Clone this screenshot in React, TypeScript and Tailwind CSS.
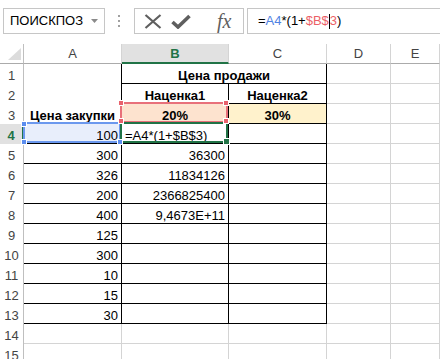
import React from "react";

const g = "border-[#d4d4d4]";
const k = "border-black";

function Cell({ children, className = "" }: { children?: React.ReactNode; className?: string }) {
  return (
    <div
      className={`relative flex items-end whitespace-nowrap border-r border-b px-[3px] text-[13px] leading-[15px] text-black ${className}`}
    >
      {children}
    </div>
  );
}

function RowHead({ n, active = false }: { n: number; active?: boolean }) {
  return (
    <div
      className={`flex items-end justify-center pb-[1px] text-[13px] leading-[15px] ${
        active
          ? "border-r-2 border-[#217346] bg-[#e1e1e1] font-bold text-[#217346]"
          : "border-r border-[#bfbfbf] text-[#444]"
      }`}
    >
      {n}
    </div>
  );
}

function ColHead({ label, active = false }: { label: string; active?: boolean }) {
  return (
    <div
      className={`flex items-center justify-center border-r border-r-[#d4d4d4] text-[13px] leading-[15px] ${
        active
          ? "border-b-2 border-b-[#217346] bg-[#e1e1e1] font-bold text-[#217346]"
          : "border-b border-b-[#ababab] text-[#444]"
      }`}
    >
      {label}
    </div>
  );
}

const dataA = [300, 326, 200, 400, 125, 300, 10, 15, 30];
const dataB = ["36300", "11834126", "2366825400", "9,4673E+11", "", "", "", "", ""];

export default function App() {
  return (
    <div className="h-[359px] w-[440px] overflow-hidden bg-white font-['Liberation_Sans',Arial,sans-serif]">
      {/* formula bar */}
      <div className="flex h-[44px] items-start pt-[8px]">
        <div className="ml-[3px] flex h-[26px] w-[102px] items-center justify-between border border-[#c6c6c6] pl-[6px] pr-[6px] text-[13px] text-black">
          <span>ПОИСКПОЗ</span>
          <svg width="7" height="4" viewBox="0 0 7 4">
            <polygon points="0,0 7,0 3.5,4" fill="#8a8a8a" />
          </svg>
        </div>
        <div className="ml-[13px] mt-[7px] flex flex-col gap-[3px]">
          <span className="h-[2px] w-[2px] bg-[#a0a0a0]" />
          <span className="h-[2px] w-[2px] bg-[#a0a0a0]" />
          <span className="h-[2px] w-[2px] bg-[#a0a0a0]" />
        </div>
        <div className="ml-[14px] flex h-[26px] w-[110px] items-center border border-[#c6c6c6]">
          <svg className="ml-[9px]" width="18" height="15" viewBox="0 0 18 15">
            <path d="M1.5 1 L16.5 14 M16.5 1 L1.5 14" stroke="#5f5f5f" strokeWidth="2.2" fill="none" />
          </svg>
          <svg className="ml-[9px]" width="20" height="15" viewBox="0 0 20 15">
            <path d="M1.5 8 L7 13 L18.5 2" stroke="#5f5f5f" strokeWidth="3.6" fill="none" />
          </svg>
          <span className="ml-[26px] font-['Liberation_Serif',serif] text-[20px] italic leading-none text-[#5f5f5f]">
            fx
          </span>
        </div>
        <div className="ml-[3px] flex h-[26px] flex-1 items-center border-y border-l border-[#c6c6c6] pl-[10px] text-[13px] text-black">
          <span>=</span>
          <span className="text-[#4f82e3]">A4</span>
          <span>*(1+</span>
          <span className="text-[#ec5f67]">$B$</span>
          <span className="h-[15px] w-px bg-black" />
          <span className="text-[#ec5f67]">3</span>
          <span>)</span>
        </div>
      </div>

      {/* sheet */}
      <div className="grid grid-cols-[24px_98px_107px_98px_64px_1fr] auto-rows-[20px]">
        <div className="relative border-r border-b border-r-[#bfbfbf] border-b-[#ababab]">
          <svg className="absolute left-0 top-0" width="23" height="19" viewBox="0 0 23 19">
            <polygon points="21,4 21,16 8,16" fill="#dcdcdc" />
          </svg>
        </div>
        <ColHead label="A" />
        <ColHead label="B" active />
        <ColHead label="C" />
        <ColHead label="D" />
        <ColHead label="E" />

        {/* row 1 */}
        <RowHead n={1} />
        <Cell className={`row-span-3 justify-center font-bold ${k}`}>Цена закупки</Cell>
        <Cell className={`col-span-2 justify-center font-bold ${k}`}>Цена продажи</Cell>
        <Cell className={g} />
        <Cell className={g} />

        {/* row 2 */}
        <RowHead n={2} />
        <Cell className={`justify-center font-bold ${k}`}>Наценка1</Cell>
        <Cell className={`justify-center font-bold ${k}`}>Наценка2</Cell>
        <Cell className={g} />
        <Cell className={g} />

        {/* row 3 */}
        <RowHead n={3} />
        <Cell className={`justify-center bg-[#fde3cf] font-bold ${k}`}>
          20%
          <div className="absolute -left-[2px] -top-[2px] right-0 bottom-0 border-2 border-[#e8707a]" />
          <div className="absolute -left-[4px] -top-[4px] z-20 h-[6px] w-[6px] border border-white bg-[#e8626c]" />
          <div className="absolute -right-[1px] -top-[4px] z-20 h-[6px] w-[6px] border border-white bg-[#e8626c]" />
          <div className="absolute -left-[4px] -bottom-[1px] z-20 h-[6px] w-[6px] border border-white bg-[#e8626c]" />
          <div className="absolute -right-[1px] -bottom-[1px] z-20 h-[6px] w-[6px] border border-white bg-[#e8626c]" />
        </Cell>
        <Cell className={`justify-center bg-[#fff2cc] font-bold ${k}`}>30%</Cell>
        <Cell className={g} />
        <Cell className={g} />

        {/* row 4 */}
        <RowHead n={4} active />
        <Cell className={`justify-end bg-[#e8eefb] ${k}`}>
          100
          <div className="absolute -left-[1px] -top-[2px] right-0 bottom-0 z-10 border-2 border-[#6b98ee]" />
          <div className="absolute -left-[3px] -top-[3px] z-20 h-[6px] w-[6px] border border-white bg-[#5b8def]" />
          <div className="absolute -left-[3px] -bottom-[2px] z-20 h-[6px] w-[6px] border border-white bg-[#5b8def]" />
          <div className="absolute -right-[2px] -bottom-[2px] z-20 h-[6px] w-[6px] border border-white bg-[#5b8def]" />
        </Cell>
        <Cell className={k}>
          =A4*(1+$B$3)
          <div className="absolute -left-[2px] -top-[2px] right-0 bottom-0 z-10 border-2 border-[#217346]" />
          <div className="absolute -right-[2px] -bottom-[2px] z-30 h-[7px] w-[7px] border border-white bg-[#217346]" />
        </Cell>
        <Cell className={k} />
        <Cell className={g} />
        <Cell className={g} />

        {dataA.map((a, i) => (
          <React.Fragment key={i}>
            <RowHead n={i + 5} />
            <Cell className={`justify-end ${k}`}>{a}</Cell>
            <Cell className={`justify-end ${k}`}>{dataB[i]}</Cell>
            <Cell className={k} />
            <Cell className={g} />
            <Cell className={g} />
          </React.Fragment>
        ))}

        {[14, 15].map((n) => (
          <React.Fragment key={n}>
            <RowHead n={n} />
            <Cell className={g} />
            <Cell className={g} />
            <Cell className={g} />
            <Cell className={g} />
            <Cell className={g} />
          </React.Fragment>
        ))}
      </div>
    </div>
  );
}
